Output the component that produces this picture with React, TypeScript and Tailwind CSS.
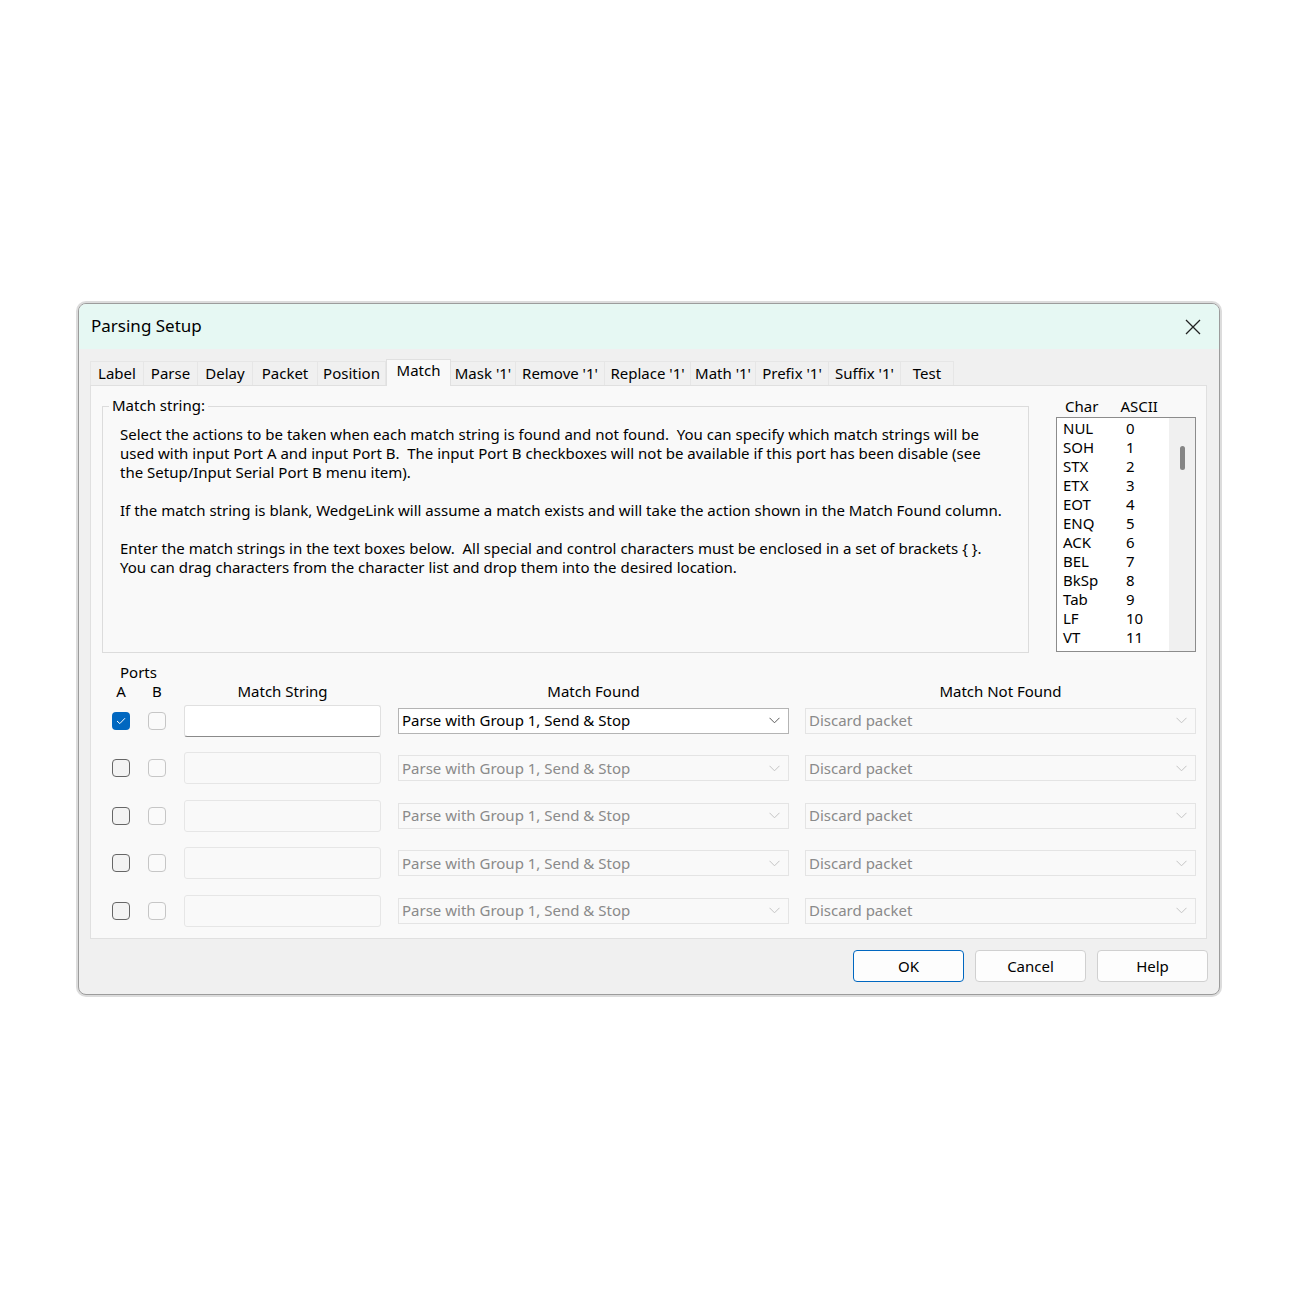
import React from "react";

const font = { fontFamily: '"Noto Sans", "Open Sans", sans-serif' };

const tabs: { label: string; w: string }[] = [
  { label: "Label", w: "w-[54px]" },
  { label: "Parse", w: "w-[54px]" },
  { label: "Delay", w: "w-[55px]" },
  { label: "Packet", w: "w-[65px]" },
  { label: "Position", w: "w-[68px]" },
  { label: "Match", w: "w-[65px]" },
  { label: "Mask '1'", w: "w-[65px]" },
  { label: "Remove '1'", w: "w-[89px]" },
  { label: "Replace '1'", w: "w-[86px]" },
  { label: "Math '1'", w: "w-[65px]" },
  { label: "Prefix '1'", w: "w-[73px]" },
  { label: "Suffix '1'", w: "w-[72px]" },
  { label: "Test", w: "w-[53px]" },
];

const chars: [string, number][] = [
  ["NUL", 0],
  ["SOH", 1],
  ["STX", 2],
  ["ETX", 3],
  ["EOT", 4],
  ["ENQ", 5],
  ["ACK", 6],
  ["BEL", 7],
  ["BkSp", 8],
  ["Tab", 9],
  ["LF", 10],
  ["VT", 11],
];

function Chevron({ dim }: { dim?: boolean }) {
  return (
    <svg width="11" height="7" viewBox="0 0 11 7" className="shrink-0">
      <path
        d="M0.5 0.8 L5.5 5.8 L10.5 0.8"
        fill="none"
        stroke={dim ? "#c4c4c4" : "#5a5a5a"}
        strokeWidth="1"
      />
    </svg>
  );
}

function Check({ checked, enabled }: { checked?: boolean; enabled?: boolean }) {
  if (checked) {
    return (
      <div className="flex h-[18px] w-[18px] items-center justify-center rounded-[4px] bg-[#0067c0]">
        <svg width="10" height="8" viewBox="0 0 10 8">
          <path d="M1 4 L3.8 6.6 L9 1.2" fill="none" stroke="#fff" strokeWidth="1" />
        </svg>
      </div>
    );
  }
  return (
    <div
      className={
        enabled
          ? "h-[18px] w-[18px] rounded-[4px] border border-[#666] bg-[#f3f3f3]"
          : "h-[18px] w-[18px] rounded-[4px] border border-[#c6c6c6] bg-[#fafafa]"
      }
    />
  );
}

function Select({ text, active }: { text: string; active?: boolean }) {
  return (
    <div
      className={
        active
          ? "flex h-[26px] w-[391px] items-center justify-between border border-[#b4b4b4] bg-white pl-[3px] pr-[8px] text-black"
          : "flex h-[26px] w-[391px] items-center justify-between border border-[#e4e4e4] bg-[#f9f9f9] pl-[3px] pr-[8px] text-[#8a8a8a]"
      }
    >
      <span>{text}</span>
      <Chevron dim={!active} />
    </div>
  );
}

function MatchRow({ first }: { first?: boolean }) {
  return (
    <div className="flex h-[47.5px] items-center">
      <div className="ml-[21px]">
        <Check checked={first} enabled />
      </div>
      <div className="ml-[18px]">
        <Check />
      </div>
      <div
        className={
          first
            ? "ml-[18px] h-[32px] w-[197px] rounded-[3px] border border-[#e0e0e0] border-b-[#8a8a8a] bg-white"
            : "ml-[18px] h-[32px] w-[197px] rounded-[3px] border border-[#e6e6e6] bg-[#f9f9f9]"
        }
      />
      <div className="ml-[17px]">
        <Select text="Parse with Group 1, Send & Stop" active={first} />
      </div>
      <div className="ml-[16px]">
        <Select text="Discard packet" />
      </div>
    </div>
  );
}

export default function App() {
  return (
    <div className="min-h-[1300px] w-[1300px] bg-white pt-[303px] pl-[78px] text-[15px] leading-[19px] text-black" style={font}>
      <div className="w-[1142px] overflow-hidden rounded-[8px] border border-[#9c9c9c] bg-[#f0f0f0] shadow-[0_0_0_2px_#dcdcdc]">
        {/* title bar */}
        <div className="flex h-[45px] items-center justify-between bg-[#e6f8f3] pl-[12px] pr-[18px]">
          <span className="-mt-[2px] text-[17px]">Parsing Setup</span>
          <svg width="16" height="16" viewBox="0 0 16 16">
            <path d="M1 1 L15 15 M15 1 L1 15" stroke="#222" strokeWidth="1.3" />
          </svg>
        </div>

        <div className="px-[11px] pt-[12px]">
          {/* tabs */}
          <div className="flex h-[24px] items-end">
            {tabs.map((t) =>
              t.label === "Match" ? (
                <div
                  key={t.label}
                  className={`${t.w} -mb-px z-10 flex h-[27px] items-start justify-center border border-b-0 border-[#e0e0e0] bg-[#f9f9f9] pt-[1px]`}
                >
                  {t.label}
                </div>
              ) : (
                <div
                  key={t.label}
                  className={`${t.w} flex h-[24px] items-center justify-center border border-b-0 border-l-0 border-[#e6e6e6] bg-[#f0f0f0] pb-[1px] first:border-l`}
                >
                  {t.label}
                </div>
              )
            )}
          </div>

          {/* panel */}
          <div className="h-[554px] w-[1117px] border border-[#e0e0e0] bg-[#f9f9f9]">
            <div className="flex pl-[11px] pr-[10px] pt-[20px]">
              {/* group box */}
              <div className="relative h-[247px] w-[927px] border border-[#dcdcdc]">
                <span className="absolute -top-[11px] left-[6px] bg-[#f9f9f9] px-[3px]">Match string:</span>
                <div className="whitespace-nowrap pl-[17px] pt-[18px]">
                  <p>Select the actions to be taken when each match string is found and not found.&nbsp; You can specify which match strings will be</p>
                  <p>used with input Port A and input Port B.&nbsp; The input Port B checkboxes will not be available if this port has been disable (see</p>
                  <p>the Setup/Input Serial Port B menu item).</p>
                  <p className="mt-[19px]">
                    If the match string is blank, WedgeLink will assume a match exists and will take the action shown in the Match Found column.
                  </p>
                  <p className="mt-[19px]">
                    Enter the match strings in the text boxes below.&nbsp; All special and control characters must be enclosed in a set of brackets {"{ }"}.
                  </p>
                  <p>You can drag characters from the character list and drop them into the desired location.</p>
                </div>
              </div>

              {/* char list */}
              <div className="ml-[27px] -mt-[11px] w-[140px]">
                <div className="flex h-[22px] items-center">
                  <span className="ml-[9px]">Char</span>
                  <span className="ml-[22px]">ASCII</span>
                </div>
                <div className="flex h-[235px] border border-[#8c8c8c] bg-white">
                  <div className="flex-1 pl-[6px] pt-[1px]">
                    {chars.map(([c, n]) => (
                      <div key={c} className="flex h-[19px] items-center">
                        <span className="w-[63px]">{c}</span>
                        <span>{n}</span>
                      </div>
                    ))}
                  </div>
                  <div className="w-[26px] bg-[#f0f0f0] pl-[11px] pt-[28px]">
                    <div className="h-[24px] w-[5px] rounded-full bg-[#858585]" />
                  </div>
                </div>
              </div>
            </div>

            {/* headers */}
            <div className="mt-[10px] pl-[29px]">Ports</div>
            <div className="flex h-[19px] items-center">
              <span className="ml-[21px] w-[18px] text-center">A</span>
              <span className="ml-[18px] w-[18px] text-center">B</span>
              <span className="ml-[18px] w-[197px] text-center">Match String</span>
              <span className="ml-[17px] w-[391px] text-center">Match Found</span>
              <span className="ml-[16px] w-[391px] text-center">Match Not Found</span>
            </div>

            <div className="-mt-[4px]">
              <MatchRow first />
              <MatchRow />
              <MatchRow />
              <MatchRow />
              <MatchRow />
            </div>
          </div>

          {/* buttons */}
          <div className="flex justify-end gap-[11px] pt-[11px] pb-[12px]">
            <button className="h-[32px] w-[111px] rounded-[4px] border border-[#0067c0] bg-[#fdfdfd]">OK</button>
            <button className="h-[32px] w-[111px] rounded-[4px] border border-[#d0d0d0] bg-[#fdfdfd]">Cancel</button>
            <button className="h-[32px] w-[111px] rounded-[4px] border border-[#d0d0d0] bg-[#fdfdfd]">Help</button>
          </div>
        </div>
      </div>
    </div>
  );
}
